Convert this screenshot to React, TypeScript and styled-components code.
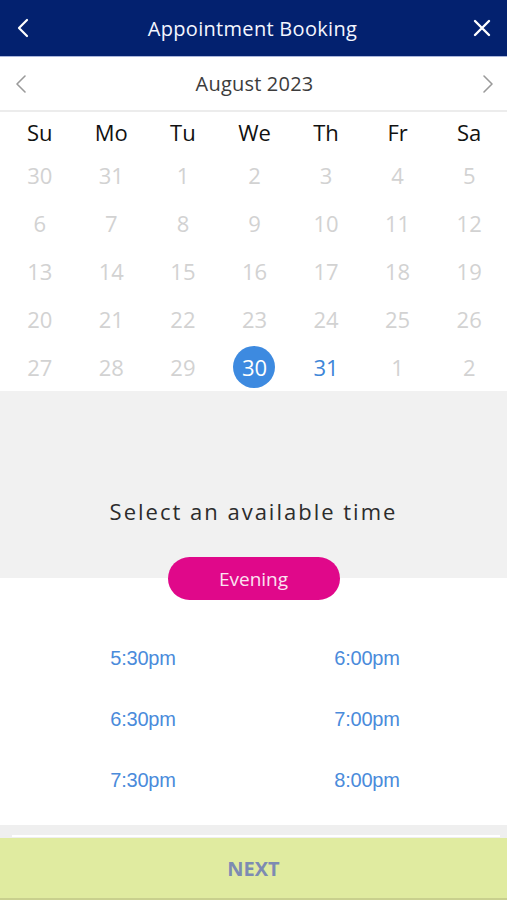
import React from "react";
import styled, { createGlobalStyle } from "styled-components";

const Global = createGlobalStyle`
  html, body { margin: 0; padding: 0; background: #fff; }
  body { font-family: "Open Sans", "Noto Sans", sans-serif; width: 507px; overflow: hidden; }
  * { box-sizing: border-box; }
`;

const Page = styled.div`
  width: 507px;
  height: 900px;
  display: flex;
  flex-direction: column;
  background: #fff;
`;

const Header = styled.header`
  height: 57px;
  background: #03216f;
  border-bottom: 1px solid #aab6dc;
  display: flex;
  align-items: center;
  justify-content: space-between;
  padding: 0 12px 0 10px;
  color: #fff;
`;

const Title = styled.h1`
  margin: 0;
  font-size: 20px;
  font-weight: 400;
  letter-spacing: 0.3px;
  color: #f4f6ff;
`;

const IconBtn = styled.button`
  width: 26px;
  height: 26px;
  padding: 0;
  border: none;
  background: transparent;
  display: flex;
  align-items: center;
  justify-content: center;
  color: inherit;
`;

const MonthRow = styled.div`
  height: 55px;
  border-bottom: 2px solid #ececec;
  display: flex;
  align-items: center;
  justify-content: space-between;
  padding: 0 12px 0 14px;
`;

const MonthLabel = styled.div`
  font-size: 20px;
  color: #3c3c3c;
  letter-spacing: 0.2px;
`;

const Grid = styled.div`
  display: grid;
  grid-template-columns: repeat(7, 1fr);
  padding: 0 2px 0 4px;
`;

const WeekDay = styled.div`
  height: 39px;
  display: flex;
  align-items: center;
  justify-content: center;
  font-size: 22px;
  color: #111;
`;

const DayCell = styled.div`
  height: 48px;
  display: flex;
  align-items: center;
  justify-content: center;
`;

const Day = styled.span<{ $state: "muted" | "active" | "selected" }>`
  width: 42px;
  height: 42px;
  border-radius: 50%;
  display: flex;
  align-items: center;
  justify-content: center;
  font-size: 22px;
  color: ${(p) => (p.$state === "muted" ? "#d2d2d2" : p.$state === "active" ? "#3d86d8" : "#fff")};
  background: ${(p) => (p.$state === "selected" ? "#3d8ae0" : "transparent")};
`;

const TimeHead = styled.section`
  background: linear-gradient(#f1f1f1 0, #f1f1f1 187px, #fff 187px);
  display: flex;
  flex-direction: column;
  align-items: center;
  padding-top: 106px;
`;

const Prompt = styled.div`
  font-size: 22px;
  line-height: 28px;
  letter-spacing: 2px;
  color: #2c2c2c;
`;

const Pill = styled.div`
  margin-top: 32px;
  width: 172px;
  height: 43px;
  border-radius: 22px;
  background: #e0088a;
  color: #fbe3f1;
  font-size: 19px;
  display: flex;
  align-items: center;
  justify-content: center;
`;

const Times = styled.div`
  display: grid;
  grid-template-columns: 224px 224px;
  grid-auto-rows: 61px;
  justify-content: center;
  padding: 28px 0 13px 3px;
`;

const Time = styled.div`
  display: flex;
  align-items: center;
  justify-content: center;
  font-family: "Liberation Sans", Arial, sans-serif;
  font-size: 20px;
  color: #4a8bdb;
  letter-spacing: -0.2px;
`;

const Spacer = styled.div`
  flex: 1;
`;

const Strip = styled.div`
  height: 13px;
  background: #efefef;
  padding: 10px 7px 0 12px;
`;

const StripLine = styled.div`
  height: 2px;
  background: #fff;
`;

const Next = styled.button`
  height: 62px;
  border: none;
  border-bottom: 2px solid #c9d08e;
  background: #e0eba0;
  font-family: "Open Sans", sans-serif;
  font-weight: 700;
  font-size: 20px;
  color: #7d8bb2;
  width: 100%;
`;

const Chevron = ({ dir, color, w = 2 }: { dir: "l" | "r"; color: string; w?: number }) => (
  <svg width="14" height="20" viewBox="0 0 14 20" fill="none">
    <path
      d={dir === "l" ? "M11 2 L3 10 L11 18" : "M3 2 L11 10 L3 18"}
      stroke={color}
      strokeWidth={w}
      strokeLinecap="round"
      strokeLinejoin="round"
    />
  </svg>
);

const weekdays = ["Su", "Mo", "Tu", "We", "Th", "Fr", "Sa"];
const days: [number, "muted" | "active" | "selected"][] = [
  ...[30, 31].map((d) => [d, "muted"] as [number, "muted"]),
  ...Array.from({ length: 29 }, (_, i) => [i + 1, "muted"] as [number, "muted"]),
  [30, "selected"],
  [31, "active"],
  [1, "muted"],
  [2, "muted"],
];
const times = ["5:30pm", "6:00pm", "6:30pm", "7:00pm", "7:30pm", "8:00pm"];

export default function App() {
  return (
    <Page>
      <Global />
      <Header>
        <IconBtn aria-label="back">
          <Chevron dir="l" color="#fff" w={2.2} />
        </IconBtn>
        <Title>Appointment Booking</Title>
        <IconBtn aria-label="close">
          <svg width="20" height="20" viewBox="0 0 20 20">
            <path d="M3 3 L17 17 M17 3 L3 17" stroke="#fff" strokeWidth="2.4" strokeLinecap="round" />
          </svg>
        </IconBtn>
      </Header>
      <MonthRow>
        <Chevron dir="l" color="#9a9a9a" w={1.6} />
        <MonthLabel>August 2023</MonthLabel>
        <Chevron dir="r" color="#9a9a9a" w={1.6} />
      </MonthRow>
      <Grid>
        {weekdays.map((w) => (
          <WeekDay key={w}>{w}</WeekDay>
        ))}
        {days.map(([d, s], i) => (
          <DayCell key={i}>
            <Day $state={s}>{d}</Day>
          </DayCell>
        ))}
      </Grid>
      <TimeHead>
        <Prompt>Select an available time</Prompt>
        <Pill>Evening</Pill>
      </TimeHead>
      <Times>
        {times.map((t) => (
          <Time key={t}>{t}</Time>
        ))}
      </Times>
      <Spacer />
      <Strip>
        <StripLine />
      </Strip>
      <Next>NEXT</Next>
    </Page>
  );
}
